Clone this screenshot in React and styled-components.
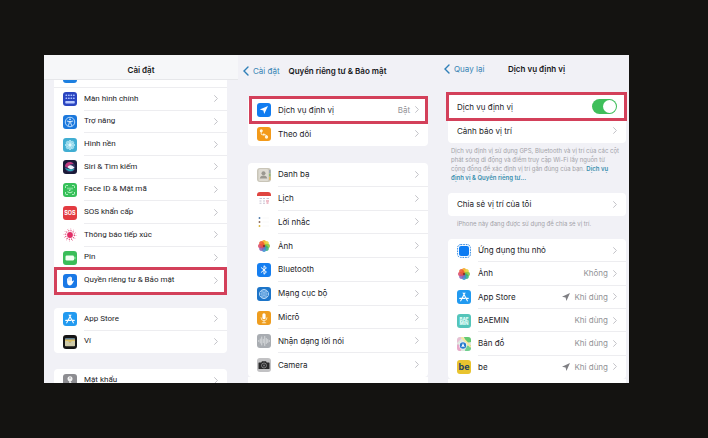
import React from "react";
import styled, { createGlobalStyle } from "styled-components";

const GlobalStyle = createGlobalStyle`
  *, *::before, *::after { box-sizing: border-box; }
  body {
    margin: 0;
    background: #141311;
    color: #1c1c1f;
    font: 8px/12px Inter, "Noto Sans", sans-serif;
  }
`;

const Page = styled.main`
  height: 100vh;
  padding: 55px 79px 55px 44px;
`;

const Screens = styled.div`
  display: grid;
  grid-template-columns: 194fr 200fr 191fr;
  height: 100%;
  overflow: hidden;
  background: #f1f1f6;
`;

const Screen = styled.section`
  display: flex;
  flex-direction: column;
  min-width: 0;
  min-height: 0;
  overflow: hidden;
`;

const NavBar = styled.header`
  display: grid;
  grid-template-columns: 1fr auto 1fr;
  align-items: center;
  flex: none;
  padding: ${(p) => p.$padding};
  ${(p) => p.$solid && "background: #f6f7f9; border-bottom: 1px solid #e6e7ea;"}
`;

const Title = styled.h1`
  grid-column: 2;
  margin: 0;
  font-size: 8px;
  line-height: 12px;
  font-weight: 600;
  color: #17171a;
  white-space: nowrap;
`;

const BackLink = styled.a`
  display: flex;
  align-items: center;
  gap: 4px;
  color: #3683b4;
  text-decoration: none;
  white-space: nowrap;
`;

const Group = styled.ul`
  display: grid;
  grid-auto-rows: 1fr;
  flex: none;
  min-height: ${(p) => p.$height}px;
  margin: ${(p) => p.$gap || 0}px ${(p) => p.$right}px 0 10px;
  padding: 0;
  list-style: none;
  background: #fff;
  border-radius: ${(p) => (p.$open ? "0" : "4px")};
  ${(p) => p.$narrow && 'font-family: Roboto, "Noto Sans", sans-serif;'}
`;

const Item = styled.li`
  position: relative;
  display: grid;
`;

const Highlight = styled.span`
  position: absolute;
  z-index: 1;
  inset: ${(p) => p.$inset};
  border: 3px solid #d3405a;
  pointer-events: none;
`;

const RowLink = styled.a`
  display: flex;
  align-items: stretch;
  gap: 7px;
  padding-left: 9px;
  color: inherit;
  text-decoration: none;
`;

const RowIcon = styled.span`
  display: flex;
  align-items: center;
  flex: none;
  svg { display: block; }
`;

const RowBody = styled.span`
  display: flex;
  flex: 1;
  align-items: center;
  gap: 5px;
  padding-right: 9px;
  border-bottom: 1px solid #ededf0;
  white-space: nowrap;
  ${Item}:last-child & { border-bottom-color: transparent; }
`;

const RowLabel = styled.span`
  flex: 1;
`;

const RowValue = styled.span`
  display: flex;
  align-items: center;
  gap: 4px;
  color: #929296;
`;

const SwitchRow = styled.label`
  display: flex;
  align-items: center;
  justify-content: space-between;
  padding: 0 9px;
  border-bottom: 1px solid #ededf0;
`;

const Switch = styled.input`
  appearance: none;
  display: flex;
  align-items: center;
  width: 25px;
  height: 15px;
  margin: 0;
  padding: 1px;
  border-radius: 8px;
  background: #d9d9dc;
  &::before {
    content: "";
    width: 13px;
    height: 13px;
    border-radius: 50%;
    background: #fff;
  }
  &:checked { background: #3fbf5b; justify-content: flex-end; }
`;

const Note = styled.p`
  flex: none;
  margin: ${(p) => p.$margin};
  font-size: 6px;
  line-height: 9px;
  color: #a2a2a8;
  white-space: nowrap;
  a { color: #3a8fae; font-weight: 600; text-decoration: none; }
`;

const Glyph = ({ children }) => (
  <svg width="14" height="14" viewBox="0 0 28 28" fill="none" aria-hidden="true">{children}</svg>
);
const Tile = ({ fill, children }) => (
  <Glyph><rect width="28" height="28" rx="6" fill={fill} />{children}</Glyph>
);

const petals = ["#f5a623", "#e8d33a", "#8cc63f", "#35b27c", "#3a8ed0", "#8b62b8", "#d94a6b", "#ee5a33"];

const AppStoreIcon = () => (
  <Tile fill="#229af0">
    <path d="M15.8 6 8.5 19.5M12.3 6l7.4 13.5M5.5 16.8h10M19 16.8h3.5M7.4 21.6l.6-1M20.7 21.6l-.6-1" stroke="#fff" strokeWidth="2.2" strokeLinecap="round" />
  </Tile>
);

const PhotosIcon = () => (
  <Glyph>
    {petals.map((c, i) => (
      <ellipse key={c} cx="14" cy="8" rx="4.4" ry="6" fill={c} fillOpacity=".88" transform={`rotate(${i * 45} 14 14)`} />
    ))}
    <circle cx="14" cy="14" r="2.4" fill="#8c3a2c" />
  </Glyph>
);

const icons = {
  display: <Tile fill="#1d7fe0" />,
  home: (
    <Tile fill="#2a45c0">
      {[6, 12].map((y) => [5, 10, 15, 20].map((x) => <rect key={`${x}-${y}`} x={x} y={y - 1} width="3.4" height="3" rx="1" fill="#a9c0ff" />))}
      <rect x="4.5" y="18" width="19" height="5" rx="1.5" fill="#b9caff" />
    </Tile>
  ),
  access: (
    <Tile fill="#1c78dc">
      <circle cx="14" cy="14" r="9.5" stroke="#c8e4ff" strokeWidth="1.8" />
      <circle cx="14" cy="8.7" r="1.7" fill="#e6f3ff" />
      <path d="M8.5 12.2l4 .8v3.2l-1.8 4.8M19.5 12.2l-4 .8v3.2l1.8 4.8M12.5 13h3" stroke="#e6f3ff" strokeWidth="1.7" strokeLinecap="round" />
    </Tile>
  ),
  wallpaper: (
    <Tile fill="#41aed2">
      {[0, 45, 90, 135, 180, 225, 270, 315].map((a) => (
        <ellipse key={a} cx="14" cy="8.5" rx="2.7" ry="4" fill="#8ed6ea" stroke="#d9f5fc" strokeWidth="1" transform={`rotate(${a} 14 14)`} />
      ))}
      <circle cx="14" cy="14" r="2.8" fill="#e9fbff" />
    </Tile>
  ),
  siri: (
    <Tile fill="#1b1a38">
      <circle cx="14" cy="14" r="10.5" fill="#343463" />
      <path d="M4 12c2-9 13-10 17-4-5-1-9 1-10 7-3 0-6-1-7-3z" fill="#c33c81" />
      <path d="M4 16c4 7 14 9 19 2-6 1-13 1-19-2z" fill="#2caebb" />
      <path d="M9 14c4-6 10-4 14 1-4 5-11 4-14-1z" fill="#eef4ff" />
    </Tile>
  ),
  face: (
    <Tile fill="#36bf59">
      <path d="M5 9V7q0-2 2-2h2M19 5h2q2 0 2 2v2M23 19v2q0 2-2 2h-2M9 23H7q-2 0-2-2v-2M10 10v2M18 10v2M14 10v5h-1M9.5 18q4.5 4 9 0" stroke="#d2ffdc" strokeWidth="1.7" strokeLinecap="round" />
    </Tile>
  ),
  sos: (
    <Tile fill="#e33b41">
      <text x="14" y="18.2" fill="#fff" fontFamily="Inter, sans-serif" fontSize="11" fontWeight="700" textAnchor="middle">SOS</text>
    </Tile>
  ),
  contact: (
    <Glyph>
      <circle cx="14" cy="14" r="5.8" fill="#e22d66" />
      <circle cx="14" cy="14" r="8.8" stroke="#e04c7b" strokeWidth="2.6" strokeDasharray="2.2 2.4" />
      <circle cx="14" cy="14" r="12" stroke="#eb8aaa" strokeWidth="2" strokeDasharray="1.8 4.4" />
    </Glyph>
  ),
  battery: (
    <Tile fill="#3abd59">
      <rect x="5" y="9" width="17" height="10" rx="2.5" fill="#f2fff4" />
      <path d="M23.8 12.3v3.4" stroke="#dfffe5" strokeWidth="1.5" strokeLinecap="round" />
    </Tile>
  ),
  hand: (
    <Tile fill="#1978e6">
      <path d="M8.2 15V9.2q1.2-1.5 2.3 0V6.7q1.3-1.6 2.5 0V5.6q1.3-1.6 2.6 0v1.5q1.3-1.4 2.4.1v8l2.2-2.1q1.7-.5 1.7 1l-3.5 6.1Q16.7 23 14 23q-5.8 0-5.8-8z" fill="#fff" />
      <path d="M10.7 8.8v4.6M13.2 7.5v5.7M15.8 7.7v5.8" stroke="#73aef4" strokeWidth=".7" />
    </Tile>
  ),
  appstore: <AppStoreIcon />,
  wallet: (
    <Tile fill="#161616">
      <rect x="4" y="6" width="20" height="5" rx="1.5" fill="#617f91" />
      <rect x="4" y="9" width="20" height="5" fill="#d9bd62" />
      <path d="M4 12h6q4 5 8 0h6v9q0 1.5-1.5 1.5h-17Q4 22.5 4 21z" fill="#cfcba9" />
    </Tile>
  ),
  key: (
    <Tile fill="#8d8d91">
      <circle cx="14" cy="9.5" r="5" fill="#f4f4f4" />
      <circle cx="14" cy="8" r="1.4" fill="#8d8d91" />
      <path d="M12.5 13h3v3l2 2-2 2 1.5 1.5L14 25l-1.5-2z" fill="#f4f4f4" />
    </Tile>
  ),
  location: <Tile fill="#117cf0"><path d="M22 6 5.5 13.2l7.3 1.7 1.6 7.3z" fill="#fff" /></Tile>,
  tracking: (
    <Tile fill="#f39a1a">
      <path d="M8.5 8.5v5q0 2 2 2h6q2.5 0 2.5 3" stroke="#fff0d0" strokeWidth="2" />
      <circle cx="8.5" cy="7.5" r="3" fill="#fff5df" />
      <circle cx="19" cy="20" r="3.3" fill="#fff5df" />
      <circle cx="13.5" cy="15" r="2" fill="#fff5df" />
    </Tile>
  ),
  contacts: (
    <Tile fill="#c9c5b8">
      <rect x="3" y="2" width="20" height="24" rx="3" fill="#dedbd2" />
      <circle cx="13" cy="10.5" r="4" fill="#9a9890" />
      <path d="M5.5 21q1-6 7.5-6t7.5 6z" fill="#9a9890" />
      <path d="M25.5 4v6" stroke="#9aa7b1" strokeWidth="3" />
      <path d="M25.5 11v6" stroke="#8fba6d" strokeWidth="3" />
      <path d="M25.5 18v6" stroke="#dfb766" strokeWidth="3" />
    </Tile>
  ),
  calendar: (
    <Glyph>
      <path d="M0 8V6q0-6 6-6h16q6 0 6 6v2z" fill="#df4540" />
      <path d="M5 13h5M12 13h4M19 13h5M5 18h4M12 18h4M5 22.5h4M12 22.5h4" stroke="#b9b4c6" strokeWidth="1.6" />
      <path d="M18 18h6M19 22h4" stroke="#df7d93" strokeWidth="2" />
    </Glyph>
  ),
  reminders: (
    <Glyph>
      <circle cx="5" cy="6" r="1.9" fill="#4d79a8" />
      <circle cx="5" cy="14" r="1.9" fill="#8a6757" />
      <circle cx="5" cy="22" r="1.9" fill="#d7b33b" />
      <path d="M11 6h13M11 14h13M11 22h13" stroke="#f1f1f3" />
    </Glyph>
  ),
  photos: <PhotosIcon />,
  bluetooth: <Tile fill="#157ef0"><path d="M8.5 9.3 18.8 18 14 22.5v-17l4.8 4.3L8.5 18.7" stroke="#fff" strokeWidth="1.9" strokeLinejoin="round" strokeLinecap="round" /></Tile>,
  network: (
    <Tile fill="#1d75c9">
      <circle cx="14" cy="14" r="9" stroke="#d9eeff" strokeWidth="1.6" />
      <ellipse cx="14" cy="14" rx="4.3" ry="9" stroke="#b9dcfa" strokeWidth="1.3" />
      <path d="M5 14h18M7 9q7 3.5 14 0M7 19q7-3.5 14 0M14 5v18" stroke="#b9dcfa" strokeWidth="1.3" />
    </Tile>
  ),
  mic: (
    <Tile fill="#ee9d1f">
      <rect x="10.8" y="4.5" width="6.4" height="12" rx="3.2" fill="#fff" />
      <path d="M8 13.5q0 6 6 6t6-6M14 19.5v4M10.5 23.5h7" stroke="#fff1d6" strokeWidth="1.6" strokeLinecap="round" />
    </Tile>
  ),
  speech: <Tile fill="#a9adb2"><path d="M3.5 13v2M6.5 10v8M9.5 6v16M12.5 10.5v7M15.5 5v18M18.5 9v10M21.5 11v6M24.5 13v2" stroke="#f0f1f2" strokeWidth="1.3" strokeLinecap="round" /></Tile>,
  camera: (
    <Tile fill="#c2c2c4">
      <path d="M4 9h4.5L10 6.5h8L19.5 9H24q1 0 1 1v11q0 1-1 1H4q-1 0-1-1V10q0-1 1-1z" fill="#282829" />
      <circle cx="14" cy="15" r="5" stroke="#a8a8aa" strokeWidth="1.3" />
      <circle cx="14" cy="15" r="2" fill="#777779" />
    </Tile>
  ),
  clips: (
    <Glyph>
      <rect x="1.2" y="1.2" width="25.6" height="25.6" rx="6" stroke="#368be0" strokeWidth="2" strokeDasharray="3.4 1.8" />
      <rect x="4" y="4" width="20" height="20" rx="4" fill="#0d7cf2" />
    </Glyph>
  ),
  baemin: (
    <Tile fill="#55c5ba">
      <text x="14" y="13" fill="#e6fffb" fontFamily="Inter, sans-serif" fontSize="9" fontWeight="800" textAnchor="middle">BAE</text>
      <text x="14" y="22" fill="#e6fffb" fontFamily="Inter, sans-serif" fontSize="9" fontWeight="800" textAnchor="middle">MIN</text>
    </Tile>
  ),
  maps: (
    <Tile fill="#dfe8df">
      <path d="M0 7q0-7 7-7h5L0 12z" fill="#e8bfd4" />
      <path d="M14 0h8q6 0 6 6v4L18 12z" fill="#62c972" />
      <path d="M28 16v6q0 6-6 6h-6l2-10z" fill="#6fcf8f" />
      <path d="M0 15h6l2 13H6q-6 0-6-6z" fill="#e8a8c8" />
      <path d="M9 0 28 20" stroke="#f8e7a0" strokeWidth="4" />
      <circle cx="12" cy="17" r="7.5" fill="#fff" />
      <circle cx="12" cy="17" r="6.4" fill="#2879ce" />
      <path d="M12 12 8.5 20.5l3.5-1.7 3.5 1.7z" fill="#fff" />
    </Tile>
  ),
  be: (
    <Tile fill="#e9c42f">
      <text x="14" y="20.5" fill="#244263" fontFamily="Inter, sans-serif" fontSize="18" fontWeight="700" textAnchor="middle">be</text>
    </Tile>
  ),
};

const Chevron = () => (
  <svg width="4" height="7" viewBox="0 0 4 7" fill="none" aria-hidden="true">
    <path d="M.6.6 3.4 3.5.6 6.4" stroke="#c2c2c7" strokeLinecap="round" />
  </svg>
);

const BackChevron = () => (
  <svg width="6" height="10" viewBox="0 0 6 10" fill="none" aria-hidden="true">
    <path d="M5 1 1 5l4 4" stroke="#2f7fb8" strokeWidth="1.4" strokeLinecap="round" />
  </svg>
);

const Arrow = () => (
  <svg width="8" height="8" viewBox="0 0 8 8" aria-hidden="true">
    <path d="M8 0 0 3.7l3.6.7L4.4 8z" fill="#7f7f83" />
  </svg>
);

function Row({ icon, label, value, arrow, mark }) {
  return (
    <Item>
      <RowLink href="#">
        {icon && <RowIcon>{icons[icon]}</RowIcon>}
        <RowBody>
          <RowLabel>{label}</RowLabel>
          {value && <RowValue>{arrow && <Arrow />}{value}</RowValue>}
          <Chevron />
        </RowBody>
      </RowLink>
      {mark && <Highlight $inset={mark} />}
    </Item>
  );
}

const PeekRow = styled.div`
  flex: none;
  display: flex;
  align-items: flex-end;
  height: 8px;
  margin: 0 11px 0 10px;
  padding: 0 0 5px 9px;
  overflow: hidden;
  background: #fff;
  box-shadow: inset 0 -1px #ededf0;
`;

const settings = [
  ["home", "Màn hình chính"], ["access", "Trợ năng"], ["wallpaper", "Hình nền"],
  ["siri", "Siri & Tìm kiếm"], ["face", "Face ID & Mật mã"], ["sos", "SOS khẩn cấp"],
  ["contact", "Thông báo tiếp xúc"], ["battery", "Pin"],
  ["hand", "Quyền riêng tư & Bảo mật", "-2px 0 -3px"],
];
const privacy = [
  ["contacts", "Danh bạ"], ["calendar", "Lịch"], ["reminders", "Lời nhắc"],
  ["photos", "Ảnh"], ["bluetooth", "Bluetooth"], ["network", "Mạng cục bộ"],
  ["mic", "Micrô"], ["speech", "Nhận dạng lời nói"], ["camera", "Camera"],
];
const apps = [
  ["clips", "Ứng dụng thu nhỏ"], ["photos", "Ảnh", "Không"],
  ["appstore", "App Store", "Khi dùng", true], ["baemin", "BAEMIN", "Khi dùng"],
  ["maps", "Bản đồ", "Khi dùng"], ["be", "be", "Khi dùng", true],
];

export default function App() {
  return (
    <>
      <GlobalStyle />
      <Page>
        <Screens>
          <Screen>
            <NavBar $solid $padding="9px 0 3px"><Title>Cài đặt</Title></NavBar>
            <PeekRow>{icons.display}</PeekRow>
            <Group $height={204} $right={11} $open $narrow>
              {settings.map(([icon, label, mark]) => <Row key={label} icon={icon} label={label} mark={mark} />)}
            </Group>
            <Group $height={45} $gap={16} $right={11} $narrow>
              <Row icon="appstore" label="App Store" />
              <Row icon="wallet" label="Ví" />
            </Group>
            <Group $height={23} $gap={16} $right={11} $narrow>
              <Row icon="key" label="Mật khẩu" />
            </Group>
          </Screen>

          <Screen>
            <NavBar $padding="10px 6px 6px 5px">
              <BackLink href="#"><BackChevron />Cài đặt</BackLink>
              <Title>Quyền riêng tư &amp; Bảo mật</Title>
            </NavBar>
            <Group $height={48} $gap={15} $right={10}>
              <Row icon="location" label="Dịch vụ định vị" value="Bật" mark="-2px 0 -2px 1px" />
              <Row icon="tracking" label="Theo dõi" />
            </Group>
            <Group $height={214} $gap={17} $right={10}>
              {privacy.map(([icon, label]) => <Row key={label} icon={icon} label={label} />)}
            </Group>
            <Group $height={24} $right={10} $open />
          </Screen>

          <Screen>
            <NavBar $padding="8px 0 6px 6px">
              <BackLink href="#"><BackChevron />Quay lại</BackLink>
              <Title>Dịch vụ định vị</Title>
            </NavBar>
            <Group $height={48} $gap={14} $right={3}>
              <Item>
                <SwitchRow>
                  <RowLabel>Dịch vụ định vị</RowLabel>
                  <Switch type="checkbox" role="switch" defaultChecked />
                </SwitchRow>
                <Highlight $inset="-3px -1px -2px -2px" />
              </Item>
              <Row label="Cảnh báo vị trí" />
            </Group>
            <Note $margin="3px 0 0 13px">
              Dịch vụ định vị sử dụng GPS, Bluetooth và vị trí của các cột<br />
              phát sóng di động và điểm truy cập Wi-Fi lấy nguồn từ<br />
              cộng đồng để xác định vị trí gần đúng của bạn. <a href="#">Dịch vụ<br />
              định vị &amp; Quyền riêng tư...</a>
            </Note>
            <Group $height={23} $gap={11} $right={3}>
              <Row label="Chia sẻ vị trí của tôi" />
            </Group>
            <Note $margin="3px 0 0 19px">iPhone này đang được sử dụng để chia sẻ vị trí.</Note>
            <Group $height={140} $gap={11} $right={3}>
              {apps.map(([icon, label, value, arrow]) => (
                <Row key={label} icon={icon} label={label} value={value} arrow={arrow} />
              ))}
            </Group>
            <Group $height={24} $right={3} $open />
          </Screen>
        </Screens>
      </Page>
    </>
  );
}
